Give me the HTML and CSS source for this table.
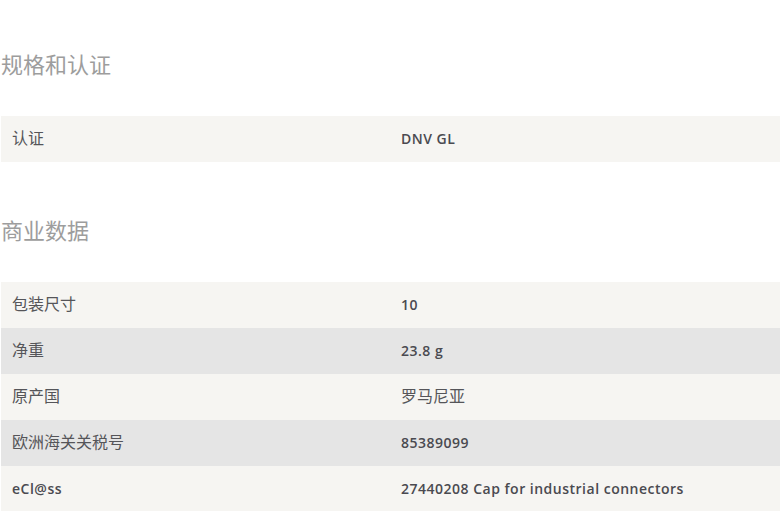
FILE: index.html
```html
<!DOCTYPE html>
<html lang="zh">
<head>
<meta charset="utf-8">
<link rel="stylesheet" href="styles.css">
</head>
<body>
<div class="page">
  <section class="section">
    <h2 class="section-title">规格和认证</h2>
    <div class="table">
      <div class="row light"><div class="label">认证</div><div class="value">DNV GL</div></div>
    </div>
  </section>
  <section class="section">
    <h2 class="section-title">商业数据</h2>
    <div class="table">
      <div class="row light"><div class="label">包装尺寸</div><div class="value">10</div></div>
      <div class="row dark"><div class="label">净重</div><div class="value">23.8 g</div></div>
      <div class="row light"><div class="label">原产国</div><div class="value cjk">罗马尼亚</div></div>
      <div class="row dark"><div class="label">欧洲海关关税号</div><div class="value">85389099</div></div>
      <div class="row light"><div class="label latin">eCl@ss</div><div class="value">27440208 Cap for industrial connectors</div></div>
    </div>
  </section>
</div>
</body>
</html>
```
FILE: styles.css
```css
html, body {
  margin: 0;
  padding: 0;
  background: #ffffff;
}
.page {
  padding: 48px 0 0 1px;
  font-family: "Open Sans", "Noto Sans CJK SC", sans-serif;
  color: #4a4a50;
}
.section + .section {
  margin-top: 52px;
}
.section-title {
  margin: 0 0 38px;
  font-size: 22px;
  line-height: 30px;
  font-weight: 400;
  color: #9d9d9d;
  font-family: "Noto Sans CJK SC", sans-serif;
}
.table {
  display: flex;
  flex-direction: column;
}
.row {
  display: grid;
  grid-template-columns: 400px 1fr;
  height: 46px;
  align-items: center;
}
.row.light { background: #f6f5f2; }
.row.dark { background: #e5e5e5; }
.label {
  padding-left: 11px;
  padding-bottom: 4px;
  font-size: 16px;
  line-height: 20px;
  font-family: "Noto Sans CJK SC", sans-serif;
  font-weight: 400;
  color: #555559;
}
.label.latin {
  font-family: "Open Sans", sans-serif;
  font-weight: 600;
  font-size: 14px;
  letter-spacing: 0.5px;
  color: #4a4a50;
  padding-bottom: 1px;
}
.value {
  font-size: 14px;
  line-height: 20px;
  padding-bottom: 1px;
  font-weight: 600;
  letter-spacing: 0.5px;
  font-family: "Open Sans", "Noto Sans CJK SC", sans-serif;
}
.value.cjk {
  font-family: "Noto Sans CJK SC", sans-serif;
  font-weight: 400;
  font-size: 16px;
  letter-spacing: 0;
  padding-bottom: 4px;
  color: #555559;
}
```
